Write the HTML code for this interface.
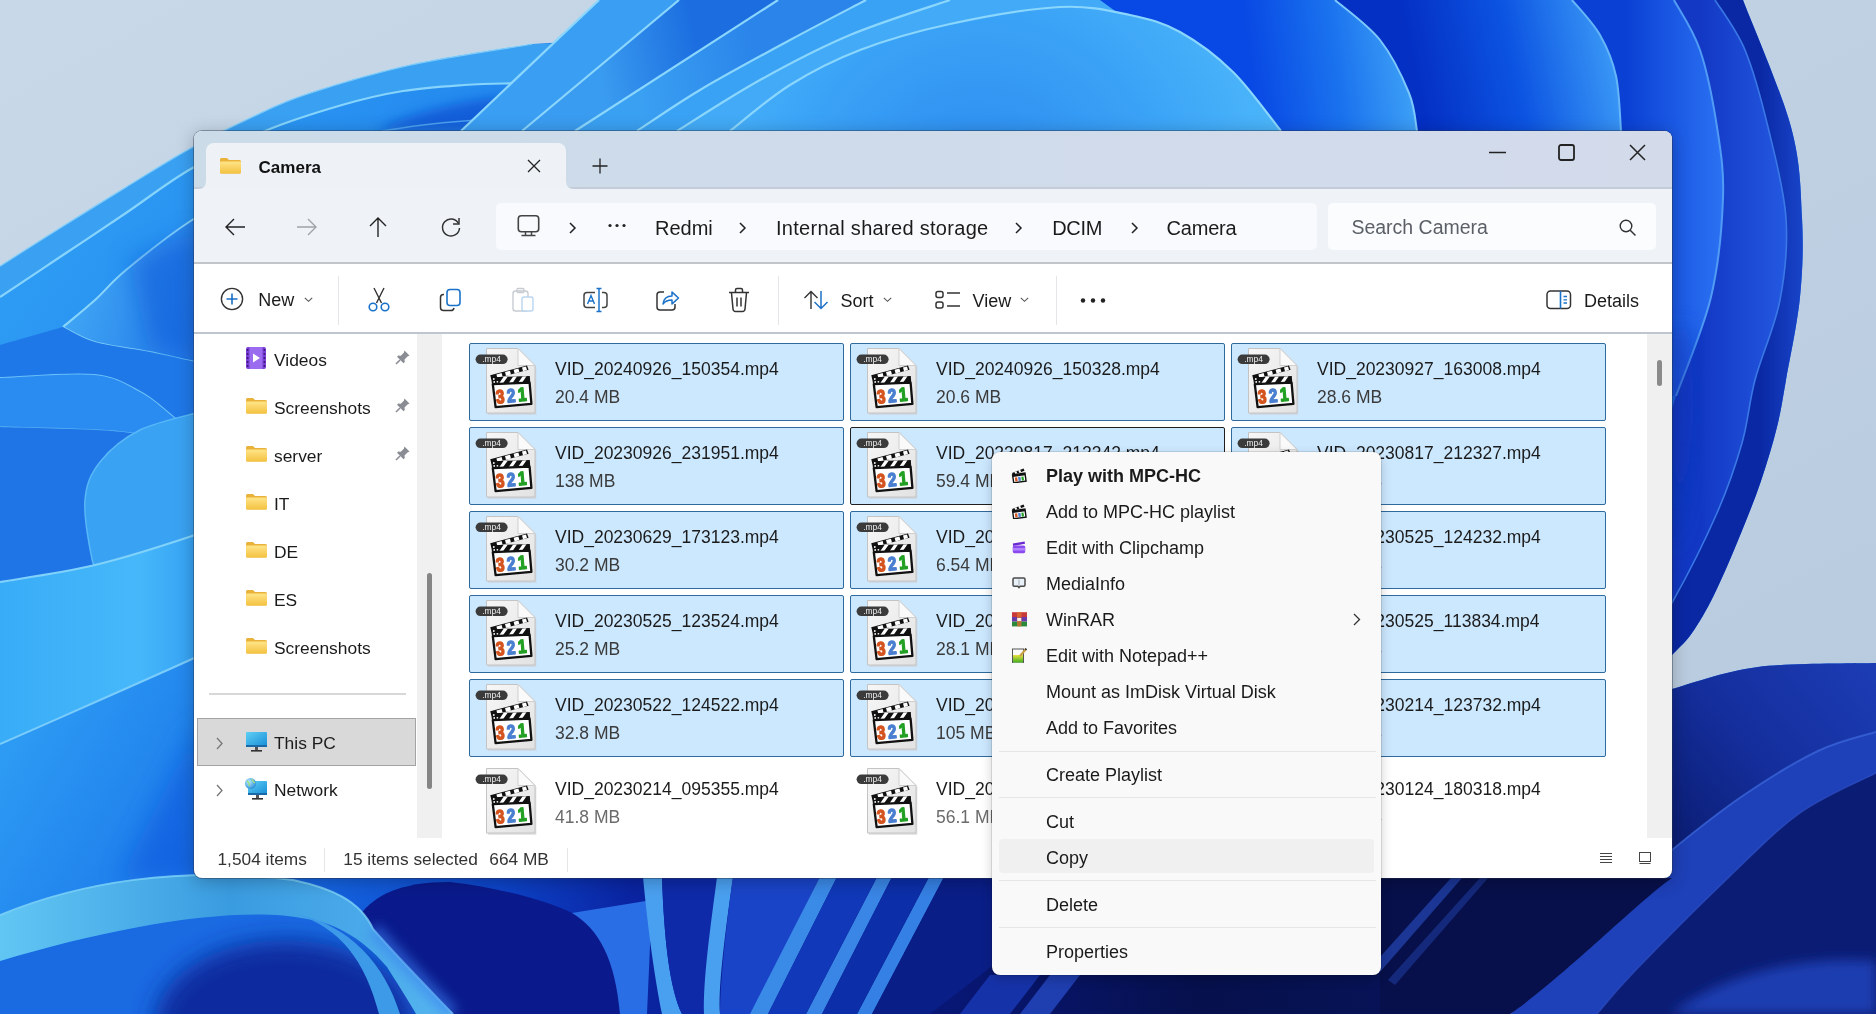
<!DOCTYPE html>
<html><head><meta charset="utf-8">
<style>
*{box-sizing:border-box;margin:0;padding:0}
html,body{width:1876px;height:1014px;overflow:hidden}
body{position:relative;font-family:"Liberation Sans",sans-serif;color:#1a1a1a;background:#c6d6e7}
.abs{position:absolute}
#wall{position:absolute;left:0;top:0;width:1876px;height:1014px}
.win{position:absolute;left:194px;top:131px;width:1478px;height:747px;border-radius:8px;overflow:hidden;background:#fff;box-shadow:0 0 0 1px rgba(40,50,70,.4),0 3px 18px rgba(0,0,0,.26)}
.t{position:absolute;white-space:nowrap;line-height:1}
body{-webkit-font-smoothing:antialiased}
.win,.menu{will-change:transform}
</style></head><body>
<svg id="wall" viewBox="0 0 1876 1014">
<defs>
<linearGradient id="bgL" x1="0" y1="0" x2="1" y2="1"><stop offset="0" stop-color="#c8d8e8"/><stop offset="1" stop-color="#b6c9dd"/></linearGradient>
<radialGradient id="azA" gradientUnits="userSpaceOnUse" cx="980" cy="200" r="300"><stop offset="0" stop-color="#2a88ee"/><stop offset=".6" stop-color="#3aa2f6"/><stop offset="1" stop-color="#4ab4fa"/></radialGradient>
<linearGradient id="midB" gradientUnits="userSpaceOnUse" x1="1250" y1="70" x2="1405" y2="50"><stop offset="0" stop-color="#0848e4"/><stop offset=".55" stop-color="#1a72ee"/><stop offset="1" stop-color="#3c9ef6"/></linearGradient>
<linearGradient id="regC" gradientUnits="userSpaceOnUse" x1="1420" y1="100" x2="1615" y2="60"><stop offset="0" stop-color="#0430c4"/><stop offset=".5" stop-color="#0c54e2"/><stop offset="1" stop-color="#3a98f6"/></linearGradient>
<linearGradient id="regD" gradientUnits="userSpaceOnUse" x1="1625" y1="150" x2="1720" y2="150"><stop offset="0" stop-color="#0a40d4"/><stop offset="1" stop-color="#2a70f2"/></linearGradient>
<linearGradient id="regE" gradientUnits="userSpaceOnUse" x1="1700" y1="200" x2="1785" y2="200"><stop offset="0" stop-color="#1238c4"/><stop offset="1" stop-color="#2458e0"/></linearGradient>
<linearGradient id="regO" gradientUnits="userSpaceOnUse" x1="1760" y1="250" x2="1802" y2="250"><stop offset="0" stop-color="#0a28a4"/><stop offset="1" stop-color="#1844c8"/></linearGradient>
<linearGradient id="bd2" gradientUnits="userSpaceOnUse" x1="600" y1="80" x2="700" y2="60"><stop offset="0" stop-color="#3a9cf0"/><stop offset="1" stop-color="#1c6ee0"/></linearGradient>
<linearGradient id="bd3" gradientUnits="userSpaceOnUse" x1="640" y1="90" x2="760" y2="70"><stop offset="0" stop-color="#3aa0f2"/><stop offset="1" stop-color="#2a84ea"/></linearGradient>
<linearGradient id="ptl" x1="0" y1="0" x2="1" y2="0.3"><stop offset="0" stop-color="#48b2f8"/><stop offset="1" stop-color="#1f74e6"/></linearGradient>
<linearGradient id="azBand" x1="0" y1="0" x2="1" y2="0"><stop offset="0" stop-color="#38acf7"/><stop offset=".6" stop-color="#46b8fa"/><stop offset="1" stop-color="#2c94f0"/></linearGradient>
<linearGradient id="lowL" x1="0" y1="0" x2="1" y2="1"><stop offset="0" stop-color="#32a4f6"/><stop offset=".6" stop-color="#1f80ec"/><stop offset="1" stop-color="#0e5ae0"/></linearGradient>
<linearGradient id="rightLow" gradientUnits="userSpaceOnUse" x1="1876" y1="680" x2="1672" y2="860"><stop offset="0" stop-color="#1c3cb4"/><stop offset=".5" stop-color="#142e9c"/><stop offset="1" stop-color="#0a1c70"/></linearGradient>
<filter id="blur2"><feGaussianBlur stdDeviation="1.5"/></filter>
<filter id="blur6" x="-50%" y="-50%" width="200%" height="200%"><feGaussianBlur stdDeviation="6"/></filter>
<filter id="blur12" x="-50%" y="-50%" width="200%" height="200%"><feGaussianBlur stdDeviation="12"/></filter>
</defs>
<rect width="1876" height="1014" fill="url(#bgL)"/>
<path d="M0 266 C10.5 259.3 42.0 239.2 63.0 226.0 C84.0 212.8 105.0 199.8 126.0 187.0 C147.0 174.2 168.0 160.7 189.0 149.0 C210.0 137.3 232.3 126.2 252.0 117.0 C271.7 107.8 280.7 102.7 307.0 94.0 C333.3 85.3 372.5 73.3 410.0 65.0 C447.5 56.7 511.7 47.5 532.0 44.0 L553 44 L599 0 L1743 0 C1751.0 21.2 1781.2 90.7 1791.0 127.0 C1800.8 163.3 1800.5 189.7 1802.0 218.0 C1803.5 246.3 1802.7 270.0 1800.0 297.0 C1797.3 324.0 1789.8 358.3 1786.0 380.0 C1782.2 401.7 1781.2 410.2 1777.0 427.0 C1772.8 443.8 1767.3 462.5 1761.0 481.0 C1754.7 499.5 1746.8 519.0 1739.0 538.0 C1731.2 557.0 1721.8 579.2 1714.0 595.0 C1706.2 610.8 1699.0 623.0 1692.0 633.0 C1685.0 643.0 1675.3 651.3 1672.0 655.0 L1600 680 L1672 689 C1686.3 685.3 1724.0 671.3 1758.0 667.0 C1792.0 662.7 1856.3 663.7 1876.0 663.0 L1876 1014 L0 1014Z" fill="#1f76ea"/>
<path d="M0 266 C10.5 259.3 42.0 239.2 63.0 226.0 C84.0 212.8 105.0 199.8 126.0 187.0 C147.0 174.2 168.0 160.7 189.0 149.0 C210.0 137.3 232.3 126.2 252.0 117.0 C271.7 107.8 280.7 102.7 307.0 94.0 C333.3 85.3 372.5 73.3 410.0 65.0 C447.5 56.7 511.7 47.5 532.0 44.0 L600 40 L600 890 L0 890 Z" fill="url(#lowL)"/>
<path d="M0 266 C10.5 259.3 42.0 239.2 63.0 226.0 C84.0 212.8 105.0 199.8 126.0 187.0 C147.0 174.2 168.0 160.7 189.0 149.0 C210.0 137.3 232.3 126.2 252.0 117.0 C271.7 107.8 280.7 102.7 307.0 94.0 C333.3 85.3 372.5 73.3 410.0 65.0 C447.5 56.7 511.7 47.5 532.0 44.0 L553 44 L600 0 L640 0 L560 84 C550.7 83.9 520.0 83.3 504.0 83.5 C488.0 83.7 480.8 83.8 464.0 85.0 C447.2 86.2 423.3 87.7 403.0 91.0 C382.7 94.3 365.0 98.3 342.0 105.0 C319.0 111.7 290.5 120.2 265.0 131.0 C239.5 141.8 212.2 156.3 189.0 170.0 C165.8 183.7 147.0 198.8 126.0 213.0 C105.0 227.2 84.0 241.0 63.0 255.0 C42.0 269.0 10.5 290.0 0.0 297.0 Z" fill="#3aa0f2"/>
<path d="M375 131 C400 118 450 100 520 96 L520 131Z" fill="#0c50d2" opacity=".75" filter="url(#blur6)"/>
<path d="M382 131 C388.8 130.0 409.3 126.7 423.0 125.0 C436.7 123.3 447.8 122.2 464.0 121.0 C480.2 119.8 510.7 118.5 520.0 118.0" fill="none" stroke="#4aa0f0" stroke-width="1.6"/>
<path d="M0 297 C10.5 290.0 42.0 269.0 63.0 255.0 C84.0 241.0 105.0 227.2 126.0 213.0 C147.0 198.8 165.8 183.7 189.0 170.0 C212.2 156.3 239.5 141.8 265.0 131.0 C290.5 120.2 319.0 111.7 342.0 105.0 C365.0 98.3 382.7 94.3 403.0 91.0 C423.3 87.7 447.2 86.2 464.0 85.0 C480.8 83.8 488.0 83.7 504.0 83.5 C520.0 83.3 550.7 83.9 560.0 84.0" fill="none" stroke="#86d4fb" stroke-width="2.2"/>
<path d="M0 266 C10.5 259.3 42.0 239.2 63.0 226.0 C84.0 212.8 105.0 199.8 126.0 187.0 C147.0 174.2 168.0 160.7 189.0 149.0 C210.0 137.3 232.3 126.2 252.0 117.0 C271.7 107.8 280.7 102.7 307.0 94.0 C333.3 85.3 372.5 73.3 410.0 65.0 C447.5 56.7 511.7 47.5 532.0 44.0" fill="none" stroke="#9adcfb" stroke-width="1.6" opacity=".7"/>
<path d="M63 327 C68.3 322.5 84.5 309.5 95.0 300.0 C105.5 290.5 110.3 283.0 126.0 270.0 C141.7 257.0 170.0 234.5 189.0 222.0 C208.0 209.5 231.5 199.5 240.0 195.0 L240 370 C233.3 368.8 215.0 366.0 200.0 363.0 C185.0 360.0 167.5 355.5 150.0 352.0 C132.5 348.5 109.5 346.2 95.0 342.0 C80.5 337.8 68.3 329.5 63.0 327.0 Z" fill="url(#ptl)"/>
<path d="M63 327 C68.3 322.5 84.5 309.5 95.0 300.0 C105.5 290.5 110.3 283.0 126.0 270.0 C141.7 257.0 170.0 234.5 189.0 222.0 C208.0 209.5 231.5 199.5 240.0 195.0" fill="none" stroke="#8ad6fb" stroke-width="2"/>
<path d="M63 327 C68.3 329.5 80.5 337.8 95.0 342.0 C109.5 346.2 132.5 348.5 150.0 352.0 C167.5 355.5 185.0 360.0 200.0 363.0 C215.0 366.0 233.3 368.8 240.0 370.0" fill="none" stroke="#7ccdfa" stroke-width="1.8"/>
<path d="M130 260 L200 230 L200 360 L150 350Z" fill="#0e5ad8" opacity=".55" filter="url(#blur12)"/>
<path d="M0 345 L63 327 C68.3 329.5 80.5 337.8 95.0 342.0 C109.5 346.2 132.5 348.5 150.0 352.0 C167.5 355.5 191.7 361.2 200.0 363.0 L200 440 C195.3 436.0 182.0 424.0 172.0 416.0 C162.0 408.0 153.0 398.8 140.0 392.0 C127.0 385.2 117.3 377.3 94.0 375.0 C70.7 372.7 15.7 377.5 0.0 378.0 Z" fill="#1f78e8"/>
<path d="M0 378 C15.7 377.5 70.7 372.7 94.0 375.0 C117.3 377.3 127.0 385.2 140.0 392.0 C153.0 398.8 162.0 408.0 172.0 416.0 C182.0 424.0 195.3 436.0 200.0 440.0" fill="none" stroke="#6cc2f8" stroke-width="2"/>
<path d="M0 378 C15.7 377.5 70.7 372.7 94.0 375.0 C117.3 377.3 127.0 385.2 140.0 392.0 C153.0 398.8 162.0 408.0 172.0 416.0 C182.0 424.0 195.3 436.0 200.0 440.0 L200 455 C193.3 452.5 174.7 444.0 160.0 440.0 C145.3 436.0 138.7 433.2 112.0 431.0 C85.3 428.8 18.7 427.7 0.0 427.0 Z" fill="#2a8cf0"/>
<path d="M0 427 C18.7 427.7 85.3 428.8 112.0 431.0 C138.7 433.2 145.3 436.0 160.0 440.0 C174.7 444.0 193.3 452.5 200.0 455.0" fill="none" stroke="#5ab4f6" stroke-width="1.6"/>
<path d="M0 427 C18.7 427.7 85.3 428.8 112.0 431.0 C138.7 433.2 145.3 436.0 160.0 440.0 C174.7 444.0 193.3 452.5 200.0 455.0 L200 600 L0 600Z" fill="#1f74e6"/>
<path d="M200 412 C190.0 415.0 156.7 421.7 140.0 430.0 C123.3 438.3 109.2 450.3 100.0 462.0 C90.8 473.7 86.3 483.8 85.0 500.0 C83.7 516.2 89.8 548.2 92.0 559.0 C94.2 569.8 97.0 564.0 98.0 565.0 L200 536 Z" fill="#3aa2f2"/>
<path d="M200 412 C190.0 415.0 156.7 421.7 140.0 430.0 C123.3 438.3 109.2 450.3 100.0 462.0 C90.8 473.7 86.3 483.8 85.0 500.0 C83.7 516.2 89.8 548.2 92.0 559.0 C94.2 569.8 97.0 564.0 98.0 565.0" fill="none" stroke="#58b8f8" stroke-width="1.5"/>
<path d="M0 582 C15.8 579.2 63.0 572.7 95.0 565.0 C127.0 557.3 169.5 543.5 192.0 536.0 C214.5 528.5 223.7 522.7 230.0 520.0 L230 640 C223.7 643.2 213.7 649.0 192.0 659.0 C170.3 669.0 132.0 685.8 100.0 700.0 C68.0 714.2 16.7 736.7 0.0 744.0 Z" fill="url(#azBand)"/>
<path d="M0 582 C15.8 579.2 63.0 572.7 95.0 565.0 C127.0 557.3 169.5 543.5 192.0 536.0 C214.5 528.5 223.7 522.7 230.0 520.0" fill="none" stroke="#80d2fa" stroke-width="2"/>
<path d="M0 744 C16.7 736.7 68.0 714.2 100.0 700.0 C132.0 685.8 170.3 669.0 192.0 659.0 C213.7 649.0 223.7 643.2 230.0 640.0 L230 1014 L0 1014Z" fill="url(#lowL)"/>
<path d="M0 744 C16.7 736.7 68.0 714.2 100.0 700.0 C132.0 685.8 170.3 669.0 192.0 659.0 C213.7 649.0 223.7 643.2 230.0 640.0" fill="none" stroke="#7accfa" stroke-width="2"/>
<path d="M120 880 L200 720 L200 880Z" fill="#0a52da" opacity=".55" filter="url(#blur12)"/>
<path d="M461 131 L599 0 L1110 0 L1281 131Z" fill="#3a9ef2"/>
<path d="M522 131 L679 0 L778 0 L575 131Z" fill="url(#bd2)"/>
<path d="M575 131 L778 0 L866 0 C790 40 700 90 637 131Z" fill="url(#bd3)"/>
<path d="M637 131 C647.5 124.2 674.5 105.2 700.0 90.0 C725.5 74.8 762.3 55.0 790.0 40.0 C817.7 25.0 853.3 6.7 866.0 0.0 L950 0 C933.3 5.8 881.7 21.7 850.0 35.0 C818.3 48.3 788.8 64.0 760.0 80.0 C731.2 96.0 690.8 122.5 677.0 131.0 Z" fill="#3aa2f4"/>
<path d="M677 131 C690.8 122.5 731.2 96.0 760.0 80.0 C788.8 64.0 818.3 48.3 850.0 35.0 C881.7 21.7 933.3 5.8 950.0 0.0 L1100 0 L1281 131Z" fill="#42aaf6"/>
<path d="M1100 0 L1335 0 C1342.5 6.7 1367.7 24.5 1380.0 40.0 C1392.3 55.5 1402.8 77.8 1409.0 93.0 C1415.2 108.2 1415.7 124.7 1417.0 131.0 L1281 131Z" fill="url(#midB)"/>
<path d="M730 131 C740.0 123.3 768.3 98.5 790.0 85.0 C811.7 71.5 833.3 60.2 860.0 50.0 C886.7 39.8 916.7 31.2 950.0 24.0 C983.3 16.8 1030.0 8.5 1060.0 7.0 C1090.0 5.5 1110.0 10.8 1130.0 15.0 C1150.0 19.2 1162.8 22.5 1180.0 32.0 C1197.2 41.5 1216.2 55.5 1233.0 72.0 C1249.8 88.5 1273.0 121.2 1281.0 131.0 Z" fill="url(#azA)"/>
<path d="M461 131 L599 0" fill="none" stroke="#8ad6fc" stroke-width="2.2"/>
<path d="M522 131 L679 0" fill="none" stroke="#8ad6fc" stroke-width="2.2"/>
<path d="M575 131 L778 0" fill="none" stroke="#8ad6fc" stroke-width="2.2"/>
<path d="M637 131 C647.5 124.2 674.5 105.2 700.0 90.0 C725.5 74.8 762.3 55.0 790.0 40.0 C817.7 25.0 853.3 6.7 866.0 0.0" fill="none" stroke="#8ad6fc" stroke-width="2.2"/>
<path d="M677 131 C690.8 122.5 731.2 96.0 760.0 80.0 C788.8 64.0 818.3 48.3 850.0 35.0 C881.7 21.7 933.3 5.8 950.0 0.0" fill="none" stroke="#8ad6fc" stroke-width="2.2"/>
<path d="M730 131 C740.0 123.3 768.3 98.5 790.0 85.0 C811.7 71.5 833.3 60.2 860.0 50.0 C886.7 39.8 916.7 31.2 950.0 24.0 C983.3 16.8 1030.0 8.5 1060.0 7.0 C1090.0 5.5 1110.0 10.8 1130.0 15.0 C1150.0 19.2 1162.8 22.5 1180.0 32.0 C1197.2 41.5 1216.2 55.5 1233.0 72.0 C1249.8 88.5 1273.0 121.2 1281.0 131.0" fill="none" stroke="#8ad6fc" stroke-width="2.2"/>
<path d="M1335 0 L1572 0 C1576.7 5.8 1592.7 22.3 1600.0 35.0 C1607.3 47.7 1612.5 60.0 1616.0 76.0 C1619.5 92.0 1620.2 121.8 1621.0 131.0 L1417 131 C1415.7 124.7 1415.2 108.2 1409.0 93.0 C1402.8 77.8 1392.3 55.5 1380.0 40.0 C1367.7 24.5 1342.5 6.7 1335.0 0.0 Z" fill="url(#regC)"/>
<path d="M1335 0 C1342.5 6.7 1367.7 24.5 1380.0 40.0 C1392.3 55.5 1402.8 77.8 1409.0 93.0 C1415.2 108.2 1415.7 124.7 1417.0 131.0" fill="none" stroke="#7cc8fa" stroke-width="2"/>
<path d="M1572 0 L1674 0 C1678.3 8.3 1692.8 28.8 1700.0 50.0 C1707.2 71.2 1713.2 102.3 1717.0 127.0 C1720.8 151.7 1724.0 169.7 1723.0 198.0 C1722.0 226.3 1718.8 264.0 1711.0 297.0 C1703.2 330.0 1681.8 379.5 1676.0 396.0 L1600 400 L1621 131 C1620.2 121.8 1619.5 92.0 1616.0 76.0 C1612.5 60.0 1607.3 47.7 1600.0 35.0 C1592.7 22.3 1576.7 5.8 1572.0 0.0 Z" fill="url(#regD)"/>
<path d="M1572 0 C1576.7 5.8 1592.7 22.3 1600.0 35.0 C1607.3 47.7 1612.5 60.0 1616.0 76.0 C1619.5 92.0 1620.2 121.8 1621.0 131.0" fill="none" stroke="#64b6f8" stroke-width="2"/>
<path d="M1674 0 L1715 0 C1720.0 8.3 1736.2 28.8 1745.0 50.0 C1753.8 71.2 1761.2 99.0 1768.0 127.0 C1774.8 155.0 1784.0 189.2 1786.0 218.0 C1788.0 246.8 1785.2 273.0 1780.0 300.0 C1774.8 327.0 1761.3 356.2 1755.0 380.0 C1748.7 403.8 1748.3 420.8 1742.0 443.0 C1735.7 465.2 1728.5 486.7 1717.0 513.0 C1705.5 539.3 1685.8 578.2 1673.0 601.0 C1660.2 623.8 1645.5 641.8 1640.0 650.0 L1600 640 L1676 396 C1681.8 379.5 1703.2 330.0 1711.0 297.0 C1718.8 264.0 1722.0 226.3 1723.0 198.0 C1724.0 169.7 1720.8 151.7 1717.0 127.0 C1713.2 102.3 1707.2 71.2 1700.0 50.0 C1692.8 28.8 1678.3 8.3 1674.0 0.0 Z" fill="url(#regE)"/>
<path d="M1674 0 C1678.3 8.3 1692.8 28.8 1700.0 50.0 C1707.2 71.2 1713.2 102.3 1717.0 127.0 C1720.8 151.7 1724.0 169.7 1723.0 198.0 C1722.0 226.3 1718.8 264.0 1711.0 297.0 C1703.2 330.0 1681.8 379.5 1676.0 396.0" fill="none" stroke="#509cf5" stroke-width="2"/>
<path d="M1715 0 L1743 0 C1751.0 21.2 1781.2 90.7 1791.0 127.0 C1800.8 163.3 1800.5 189.7 1802.0 218.0 C1803.5 246.3 1802.7 270.0 1800.0 297.0 C1797.3 324.0 1789.8 358.3 1786.0 380.0 C1782.2 401.7 1781.2 410.2 1777.0 427.0 C1772.8 443.8 1767.3 462.5 1761.0 481.0 C1754.7 499.5 1746.8 519.0 1739.0 538.0 C1731.2 557.0 1721.8 579.2 1714.0 595.0 C1706.2 610.8 1699.0 623.0 1692.0 633.0 C1685.0 643.0 1675.3 651.3 1672.0 655.0 L1600 660 L1640 650 C1645.5 641.8 1660.2 623.8 1673.0 601.0 C1685.8 578.2 1705.5 539.3 1717.0 513.0 C1728.5 486.7 1735.7 465.2 1742.0 443.0 C1748.3 420.8 1748.7 403.8 1755.0 380.0 C1761.3 356.2 1774.8 327.0 1780.0 300.0 C1785.2 273.0 1788.0 246.8 1786.0 218.0 C1784.0 189.2 1774.8 155.0 1768.0 127.0 C1761.2 99.0 1753.8 71.2 1745.0 50.0 C1736.2 28.8 1720.0 8.3 1715.0 0.0 Z" fill="url(#regO)"/>
<path d="M1715 0 C1720.0 8.3 1736.2 28.8 1745.0 50.0 C1753.8 71.2 1761.2 99.0 1768.0 127.0 C1774.8 155.0 1784.0 189.2 1786.0 218.0 C1788.0 246.8 1785.2 273.0 1780.0 300.0 C1774.8 327.0 1761.3 356.2 1755.0 380.0 C1748.7 403.8 1748.3 420.8 1742.0 443.0 C1735.7 465.2 1728.5 486.7 1717.0 513.0 C1705.5 539.3 1685.8 578.2 1673.0 601.0 C1660.2 623.8 1645.5 641.8 1640.0 650.0" fill="none" stroke="#3a78e6" stroke-width="1.6"/>
<path d="M1690 330 C1700 420 1690 500 1672 560 L1672 330Z" fill="#0c36b8" opacity=".6" filter="url(#blur12)"/>
<!-- bottom -->
<linearGradient id="botG" x1="0" y1="0" x2="1" y2="0"><stop offset="0" stop-color="#1b76e8"/><stop offset=".08" stop-color="#1462de"/><stop offset=".18" stop-color="#0d44c8"/><stop offset=".26" stop-color="#0a24a2"/><stop offset=".42" stop-color="#08187c"/><stop offset=".6" stop-color="#06104c"/><stop offset="1" stop-color="#081a70"/></linearGradient>
<rect x="194" y="876" width="1682" height="138" fill="url(#botG)"/>
<radialGradient id="navyR" cx=".5" cy=".5" r=".5"><stop offset="0" stop-color="#0a1f88"/><stop offset="1" stop-color="#0a1f88" stop-opacity="0"/></radialGradient>
<path d="M360 915 C375 895 400 882 450 882 C500 888 545 900 572 913 C605 933 630 970 647 1014 L440 1014Z" fill="#0a1a8c"/>
<ellipse cx="300" cy="1010" rx="120" ry="70" fill="#0b2a9c" opacity=".8" filter="url(#blur6)"/>
<path d="M0 961 C120 925 240 905 307 919 C330 922 360 935 387 967 C395 980 405 995 416 1014 L0 1014Z" fill="#1a6ae2"/>
<ellipse cx="285" cy="1025" rx="130" ry="85" fill="#0a2c9e" filter="url(#blur12)"/>
<linearGradient id="arcG" x1="0" y1="0" x2="460" y2="0" gradientUnits="userSpaceOnUse"><stop offset="0" stop-color="#62c6f4"/><stop offset=".5" stop-color="#3a9ce0"/><stop offset=".8" stop-color="#4aaaea"/><stop offset="1" stop-color="#58b8f0"/></linearGradient>
<path d="M0 915 C80 882 180 866 293 880 C330 888 360 900 373 929 C400 960 430 990 453 1014 L416 1014 C405 995 395 980 387 967 C360 935 330 922 307 919 C240 905 120 925 0 961Z" fill="url(#arcG)"/>
<path d="M0 915 C80 882 180 866 293 880 C330 888 360 900 373 929 C400 960 430 990 453 1014" fill="none" stroke="#80d4f8" stroke-width="2" opacity=".8"/>
<path d="M296 914 C340 928 365 960 379 1014 L400 1014 C385 965 350 925 296 914Z" fill="#3c9ae8"/>
<path d="M373 929 C400 960 430 990 453 1014" fill="none" stroke="#3a80f0" stroke-width="14" opacity=".6" filter="url(#blur6)"/>
<path d="M572 913 L652 900 L647 1014 L620 1014 C615 960 600 930 572 913Z" fill="#2a6ee6"/>
<path d="M643 877 L662 877 C664 940 670 990 682 1014 L662 1014 C655 980 648 930 643 877Z" fill="#4aa0f0"/>
<path d="M662 877 L718 877 C712 930 708 980 706 1014 L682 1014 C670 990 664 940 662 877Z" fill="#0e2aa8"/>
<path d="M717 877 L733 877 C724 940 718 990 720 1014 L704 1014 C703 980 710 930 717 877Z" fill="#4aa0f0"/>
<path d="M733 877 L820 877 L752 1014 L720 1014 C720 990 724 940 733 877Z" fill="#1a44c8"/>
<path d="M820 877 L837 877 L768 1014 L750 1014Z" fill="#3a8ae8"/>
<path d="M877 877 L892 877 L822 1014 L806 1014Z" fill="#3a86e6"/>
<path d="M837 877 L877 877 L806 1014 L768 1014Z" fill="#1038b8"/>
<path d="M929 877 L944 877 L872 1014 L857 1014Z" fill="#3580e4"/>
<path d="M892 877 L929 877 L857 1014 L822 1014Z" fill="#0c2ea8"/>
<path d="M944 877 L1000 877 L1000 960 L930 1014 L872 1014Z" fill="#0a1e88"/>
<path d="M990 975 L1040 975 L1010 1014 L960 1014Z" fill="#1a3ab8" opacity=".8"/>
<path d="M1050 975 L1080 975 L1050 1014 L1020 1014Z" fill="#2a50d0" opacity=".7"/>

<path d="M1672 689 C1686.3 685.3 1724.0 671.3 1758.0 667.0 C1792.0 662.7 1856.3 663.7 1876.0 663.0 L1876 1014 L1380 1014 L1380 700Z" fill="url(#rightLow)"/>
<path d="M1876 732 C1866.3 735.2 1840.0 740.5 1818.0 751.0 C1796.0 761.5 1768.3 778.5 1744.0 795.0 C1719.7 811.5 1694.3 831.7 1672.0 850.0 C1649.7 868.3 1632.0 883.3 1610.0 905.0 C1588.0 926.7 1556.7 961.8 1540.0 980.0 C1523.3 998.2 1515.0 1008.3 1510.0 1014.0 L1597 1014 C1603.2 1007.0 1612.5 994.3 1634.0 972.0 C1655.5 949.7 1698.3 906.5 1726.0 880.0 C1753.7 853.5 1775.0 830.8 1800.0 813.0 C1825.0 795.2 1863.3 779.7 1876.0 773.0 Z" fill="#1e40b8"/>
<path d="M1876 732 C1866.3 735.2 1840.0 740.5 1818.0 751.0 C1796.0 761.5 1768.3 778.5 1744.0 795.0 C1719.7 811.5 1694.3 831.7 1672.0 850.0 C1649.7 868.3 1632.0 883.3 1610.0 905.0 C1588.0 926.7 1556.7 961.8 1540.0 980.0 C1523.3 998.2 1515.0 1008.3 1510.0 1014.0" fill="none" stroke="#3a64d8" stroke-width="2" opacity=".8"/>
<path d="M1876 773 C1863.3 779.7 1825.0 795.2 1800.0 813.0 C1775.0 830.8 1753.7 853.5 1726.0 880.0 C1698.3 906.5 1655.5 949.7 1634.0 972.0 C1612.5 994.3 1603.2 1007.0 1597.0 1014.0 L1876 1014Z" fill="#0b1c74"/>
<path d="M1876 773 C1863.3 779.7 1825.0 795.2 1800.0 813.0 C1775.0 830.8 1753.7 853.5 1726.0 880.0 C1698.3 906.5 1655.5 949.7 1634.0 972.0 C1612.5 994.3 1603.2 1007.0 1597.0 1014.0" fill="none" stroke="#3558d0" stroke-width="1.5" opacity=".6"/>
<path d="M1671 1014 C1720 975 1800 955 1876 961 L1876 1014Z" fill="#1a3cb0" filter="url(#blur6)"/>
<path d="M1380 1014 L1380 878 L1672 878 C1640 900 1560 980 1510 1014Z" fill="#07104a"/>
<path d="M1451 878 L1462 878 L1380 972 L1372 966Z" fill="#2a50c8" opacity=".6"/>
<path d="M1480 878 L1488 878 L1395 985 L1388 980Z" fill="#2a50c8" opacity=".4"/>
</svg>

<div class="win">
<div class="abs" style="left:0px;top:0px;width:1478px;height:58px;background:linear-gradient(90deg,#cbdbe8 0%,#cfdbea 40%,#d3dbeb 100%)"></div>
<div class="abs" style="left:0px;top:56px;width:1478px;height:2px;background:#c4ccda"></div>
<div class="abs" style="left:12px;top:12px;width:360px;height:48px;background:#eef2f7;border-radius:8px 8px 0 0"></div>
<svg class="abs" style="left:4px;top:50px" width="8" height="8"><path d="M0 8 Q8 8 8 0 L8 8Z" fill="#eef2f7"/></svg>
<svg class="abs" style="left:372px;top:50px" width="8" height="8"><path d="M8 8 Q0 8 0 0 L0 8Z" fill="#eef2f7"/></svg>
<svg class="abs" style="left:25px;top:25px" width="24" height="19" viewBox="0 0 24 19"><path d="M1 3.5 Q1 2 2.5 2 H8 L10 4 H20.5 Q22 4 22 5.5 V16 Q22 17.5 20.5 17.5 H2.5 Q1 17.5 1 16Z" fill="#e9b23a"/><path d="M1 6.5 Q1 5.5 2 5.5 H21 Q22 5.5 22 6.5 V16 Q22 17.5 20.5 17.5 H2.5 Q1 17.5 1 16Z" fill="url(#fg)"/></svg>
<div class="t" style="left:64.6px;top:27.6px;font-size:17px;color:#111;font-weight:700;">Camera</div>
<svg class="abs" style="left:333px;top:28px" width="14" height="14" viewBox="0 0 14 14"><path d="M1 1L13 13M13 1L1 13" stroke="#222" stroke-width="1.3"/></svg>
<svg class="abs" style="left:398px;top:27px" width="16" height="16" viewBox="0 0 16 16"><path d="M8 0.5V15.5M0.5 8H15.5" stroke="#222" stroke-width="1.3"/></svg>
<svg class="abs" style="left:1295px;top:20px" width="17" height="3" viewBox="0 0 17 3"><path d="M0 1.5H17" stroke="#222" stroke-width="1.3"/></svg>
<svg class="abs" style="left:1364px;top:13px" width="17" height="17" viewBox="0 0 17 17"><rect x="1" y="1" width="15" height="15" rx="2" fill="none" stroke="#222" stroke-width="1.8"/></svg>
<svg class="abs" style="left:1435px;top:13px" width="17" height="17" viewBox="0 0 17 17"><path d="M1 1L16 16M16 1L1 16" stroke="#222" stroke-width="1.5"/></svg>
<div class="abs" style="left:0px;top:58px;width:1478px;height:74px;background:#eff3f8"></div>
<div class="abs" style="left:0px;top:131px;width:1478px;height:2px;background:#c2c5ca"></div>
<svg class="abs" style="left:30px;top:85px" width="22" height="22" viewBox="0 0 22 22"><path d="M21 11H2M10 3L2 11L10 19" fill="none" stroke="#222" stroke-width="1.4"/></svg>
<svg class="abs" style="left:102px;top:85px" width="22" height="22" viewBox="0 0 22 22"><path d="M1 11H20M12 3L20 11L12 19" fill="none" stroke="#a0a4a8" stroke-width="1.4"/></svg>
<svg class="abs" style="left:173px;top:85px" width="22" height="22" viewBox="0 0 22 22"><path d="M11 21V2M3 10L11 2L19 10" fill="none" stroke="#222" stroke-width="1.4"/></svg>
<svg class="abs" style="left:246px;top:85px" width="22" height="22" viewBox="0 0 22 22"><path d="M18.5 7.5A8.5 8.5 0 1 0 19.5 12" fill="none" stroke="#333" stroke-width="1.5"/><path d="M19 2V8H13" fill="none" stroke="#333" stroke-width="1.5"/></svg>
<div class="abs" style="left:302px;top:72px;width:821px;height:47px;background:#f8fafd;border-radius:5px"></div>
<svg class="abs" style="left:322px;top:83px" width="24" height="23" viewBox="0 0 24 23"><rect x="2.3" y="1.8" width="20.4" height="16" rx="3" fill="none" stroke="#444" stroke-width="1.6"/><path d="M9.5 18V21.5M15.5 18V21.5M5.5 21.5H19.5" stroke="#444" stroke-width="1.5"/></svg>
<svg class="abs" style="left:375px;top:91px" width="8" height="12" viewBox="0 0 8 12"><path d="M1 1L6 6L1 11" fill="none" stroke="#222" stroke-width="1.5"/></svg>
<svg class="abs" style="left:545px;top:91px" width="8" height="12" viewBox="0 0 8 12"><path d="M1 1L6 6L1 11" fill="none" stroke="#222" stroke-width="1.5"/></svg>
<svg class="abs" style="left:821px;top:91px" width="8" height="12" viewBox="0 0 8 12"><path d="M1 1L6 6L1 11" fill="none" stroke="#222" stroke-width="1.5"/></svg>
<svg class="abs" style="left:937px;top:91px" width="8" height="12" viewBox="0 0 8 12"><path d="M1 1L6 6L1 11" fill="none" stroke="#222" stroke-width="1.5"/></svg>
<svg class="abs" style="left:414px;top:92px" width="18" height="5" viewBox="0 0 18 5"><circle cx="2" cy="2.5" r="1.6" fill="#222"/><circle cx="9" cy="2.5" r="1.6" fill="#222"/><circle cx="16" cy="2.5" r="1.6" fill="#222"/></svg>
<div class="t" style="left:461.0px;top:86.8px;font-size:20px;color:#1b1b1b;">Redmi</div>
<div class="t" style="left:581.9px;top:86.8px;font-size:20px;color:#1b1b1b;letter-spacing:0.3px;">Internal shared storage</div>
<div class="t" style="left:858.2px;top:86.8px;font-size:20px;color:#1b1b1b;letter-spacing:-0.3px;">DCIM</div>
<div class="t" style="left:972.5px;top:86.8px;font-size:20px;color:#1b1b1b;letter-spacing:-0.2px;">Camera</div>
<div class="abs" style="left:1134px;top:72px;width:328px;height:47px;background:#fafcfe;border-radius:5px"></div>
<div class="t" style="left:1157.4px;top:87.4px;font-size:19.5px;color:#5b5f66;">Search Camera</div>
<svg class="abs" style="left:1425px;top:88px" width="18" height="18" viewBox="0 0 18 18"><circle cx="7" cy="7" r="5.8" fill="none" stroke="#333" stroke-width="1.4"/><path d="M11.2 11.2L16.5 16.5" stroke="#333" stroke-width="1.5"/></svg>
<div class="abs" style="left:0px;top:133px;width:1478px;height:69px;background:#fff"></div>
<div class="abs" style="left:0px;top:201px;width:1478px;height:2px;background:#c0c6ce"></div>
<svg class="abs" style="left:26px;top:156px" width="24" height="24" viewBox="0 0 24 24"><circle cx="12" cy="12" r="10.6" fill="none" stroke="#333" stroke-width="1.4"/><path d="M12 6.5V17.5M6.5 12H17.5" stroke="#1a6fc4" stroke-width="1.6"/></svg>
<div class="t" style="left:64.2px;top:160.3px;font-size:18px;color:#1b1b1b;">New</div>
<svg class="abs" style="left:110px;top:166px" width="9" height="6" viewBox="0 0 9 6"><path d="M0.8 0.8L4.5 4.3L8.2 0.8" fill="none" stroke="#555" stroke-width="1.1"/></svg>
<div class="abs" style="left:144px;top:145px;width:1px;height:49px;background:#e3e5e8"></div>
<div class="abs" style="left:584px;top:145px;width:1px;height:49px;background:#e3e5e8"></div>
<div class="abs" style="left:862px;top:145px;width:1px;height:49px;background:#e3e5e8"></div>
<svg class="abs" style="left:173px;top:156px" width="24" height="26" viewBox="0 0 24 26"><path d="M7 1L14.5 16M17 1L9.5 16" stroke="#333" stroke-width="1.4" fill="none"/><circle cx="6" cy="20" r="3.8" fill="none" stroke="#1a72c9" stroke-width="1.6"/><circle cx="18" cy="20" r="3.8" fill="none" stroke="#1a72c9" stroke-width="1.6"/></svg>
<svg class="abs" style="left:245px;top:157px" width="25" height="24" viewBox="0 0 25 24"><path d="M5 6.5H4.5Q1.5 6.5 1.5 9.5V19.5Q1.5 22.5 4.5 22.5H12Q14.5 22.5 15 20" fill="none" stroke="#333" stroke-width="1.5"/><rect x="8" y="1.5" width="13" height="16" rx="3" fill="none" stroke="#1a72c9" stroke-width="1.6"/></svg>
<svg class="abs" style="left:317px;top:156px" width="25" height="26" viewBox="0 0 25 26"><rect x="2" y="4" width="15" height="20" rx="2.5" fill="none" stroke="#c8ccd2" stroke-width="1.4"/><rect x="6" y="1.5" width="7" height="4" rx="1" fill="none" stroke="#c8ccd2" stroke-width="1.3"/><rect x="11" y="10" width="11" height="14" rx="2" fill="#fff" stroke="#b9d6f0" stroke-width="1.4"/></svg>
<svg class="abs" style="left:387px;top:156px" width="28" height="26" viewBox="0 0 28 26"><path d="M14 5.5H6Q3 5.5 3 8.5V17.5Q3 20.5 6 20.5H14M21 5.5H23Q26 5.5 26 8.5V17.5Q26 20.5 23 20.5H21" fill="none" stroke="#444" stroke-width="1.5"/><path d="M18 1.5V24.5M15.5 1.5H20.5M15.5 24.5H20.5" stroke="#1a72c9" stroke-width="1.5"/><path d="M6.5 17L10 8.5L13.5 17M7.8 14H12.2" fill="none" stroke="#1a72c9" stroke-width="1.4"/></svg>
<svg class="abs" style="left:461px;top:156px" width="25" height="25" viewBox="0 0 25 25"><path d="M9 5H5Q2 5 2 8V20Q2 23 5 23H17Q20 23 20 20V17" fill="none" stroke="#333" stroke-width="1.5"/><path d="M8 17Q9 9 17 9V5L23.5 11L17 17V13Q11 13 8 17Z" fill="none" stroke="#1a72c9" stroke-width="1.5" stroke-linejoin="round"/></svg>
<svg class="abs" style="left:533px;top:156px" width="24" height="26" viewBox="0 0 24 26"><path d="M2 5.5H22M8.5 5V3Q8.5 1.5 10 1.5H14Q15.5 1.5 15.5 3V5M4.5 6L6 22Q6.3 24.5 8.5 24.5H15.5Q17.7 24.5 18 22L19.5 6M10 10.5V19.5M14 10.5V19.5" fill="none" stroke="#333" stroke-width="1.5"/></svg>
<svg class="abs" style="left:609px;top:159px" width="26" height="20" viewBox="0 0 26 20"><path d="M8 19V1.5M1.5 8L8 1.5L14.5 8" fill="none" stroke="#333" stroke-width="1.4"/><path d="M18 1V18.5M11.5 12L18 18.5L24.5 12" fill="none" stroke="#1a72c9" stroke-width="1.5"/></svg>
<div class="t" style="left:646.6px;top:160.6px;font-size:18px;color:#1b1b1b;">Sort</div>
<svg class="abs" style="left:689px;top:166px" width="9" height="6" viewBox="0 0 9 6"><path d="M0.8 0.8L4.5 4.3L8.2 0.8" fill="none" stroke="#555" stroke-width="1.1"/></svg>
<svg class="abs" style="left:741px;top:159px" width="26" height="20" viewBox="0 0 26 20"><rect x="1" y="1.5" width="7" height="6" rx="2" fill="none" stroke="#333" stroke-width="1.5"/><rect x="1" y="12" width="7" height="6" rx="2" fill="none" stroke="#333" stroke-width="1.5"/><path d="M12 3H25M12 16H25" stroke="#333" stroke-width="1.5"/></svg>
<div class="t" style="left:778.5px;top:160.6px;font-size:18px;color:#1b1b1b;">View</div>
<svg class="abs" style="left:826px;top:166px" width="9" height="6" viewBox="0 0 9 6"><path d="M0.8 0.8L4.5 4.3L8.2 0.8" fill="none" stroke="#555" stroke-width="1.1"/></svg>
<svg class="abs" style="left:886px;top:166px" width="26" height="7" viewBox="0 0 26 7"><circle cx="3" cy="3.5" r="2.2" fill="#222"/><circle cx="13" cy="3.5" r="2.2" fill="#222"/><circle cx="23" cy="3.5" r="2.2" fill="#222"/></svg>
<svg class="abs" style="left:1352px;top:159px" width="26" height="20" viewBox="0 0 26 20"><rect x="1" y="1" width="23.5" height="17.5" rx="3.5" fill="none" stroke="#333" stroke-width="1.5"/><path d="M14.5 1V18.5" stroke="#1a72c9" stroke-width="1.6"/><path d="M17.5 6.5H21M17.5 9.8H21M17.5 13H21" stroke="#1a72c9" stroke-width="1.3"/></svg>
<div class="t" style="left:1390.0px;top:160.6px;font-size:18px;color:#1b1b1b;">Details</div>
<div class="abs" style="left:223px;top:203px;width:25px;height:504px;background:#f0f0f0"></div>
<div class="abs" style="left:233px;top:442px;width:5px;height:216px;background:#858585;border-radius:3px"></div>
<div class="abs" style="left:1453px;top:203px;width:25px;height:504px;background:#f0f0f0"></div>
<div class="abs" style="left:1463px;top:229px;width:5px;height:26px;background:#8a8a8a;border-radius:3px"></div>
<svg class="abs" style="left:51px;top:215px" width="22" height="24" viewBox="0 0 22 24"><rect x="1" y="1" width="20" height="22" rx="2" fill="#7b3fd6"/><rect x="4.5" y="1" width="13" height="22" fill="#9b6cf0"/><path d="M8 7.5L15 12L8 16.5Z" fill="#fff"/><g fill="#3d1a80"><rect x="1.8" y="3" width="1.6" height="2"/><rect x="1.8" y="7" width="1.6" height="2"/><rect x="1.8" y="11" width="1.6" height="2"/><rect x="1.8" y="15" width="1.6" height="2"/><rect x="1.8" y="19" width="1.6" height="2"/><rect x="18.6" y="3" width="1.6" height="2"/><rect x="18.6" y="7" width="1.6" height="2"/><rect x="18.6" y="11" width="1.6" height="2"/><rect x="18.6" y="15" width="1.6" height="2"/><rect x="18.6" y="19" width="1.6" height="2"/></g></svg>
<div class="t" style="left:80.0px;top:220.8px;font-size:17.4px;color:#1b1b1b;">Videos</div>
<svg class="abs" style="left:201px;top:218px" width="16" height="16" viewBox="0 0 16 16"><path d="M9.5 1.5L14.5 6.5L12.5 7.5L9.5 10.5L9.8 13L8.5 14.3L2 7.8L3.3 6.5L5.8 6.8L8.8 3.8Z" fill="#8a8e94"/><path d="M5 11L1 15" stroke="#8a8e94" stroke-width="1.6"/></svg>
<svg class="abs" style="left:51px;top:265px" width="24" height="19" viewBox="0 0 24 19"><path d="M1 3.5 Q1 2 2.5 2 H8 L10 4 H20.5 Q22 4 22 5.5 V16 Q22 17.5 20.5 17.5 H2.5 Q1 17.5 1 16Z" fill="#e9b23a"/><path d="M1 6.5 Q1 5.5 2 5.5 H21 Q22 5.5 22 6.5 V16 Q22 17.5 20.5 17.5 H2.5 Q1 17.5 1 16Z" fill="url(#fg)"/></svg>
<div class="t" style="left:80.0px;top:268.8px;font-size:17.4px;color:#1b1b1b;">Screenshots</div>
<svg class="abs" style="left:201px;top:266px" width="16" height="16" viewBox="0 0 16 16"><path d="M9.5 1.5L14.5 6.5L12.5 7.5L9.5 10.5L9.8 13L8.5 14.3L2 7.8L3.3 6.5L5.8 6.8L8.8 3.8Z" fill="#8a8e94"/><path d="M5 11L1 15" stroke="#8a8e94" stroke-width="1.6"/></svg>
<svg class="abs" style="left:51px;top:313px" width="24" height="19" viewBox="0 0 24 19"><path d="M1 3.5 Q1 2 2.5 2 H8 L10 4 H20.5 Q22 4 22 5.5 V16 Q22 17.5 20.5 17.5 H2.5 Q1 17.5 1 16Z" fill="#e9b23a"/><path d="M1 6.5 Q1 5.5 2 5.5 H21 Q22 5.5 22 6.5 V16 Q22 17.5 20.5 17.5 H2.5 Q1 17.5 1 16Z" fill="url(#fg)"/></svg>
<div class="t" style="left:80.0px;top:316.8px;font-size:17.4px;color:#1b1b1b;">server</div>
<svg class="abs" style="left:201px;top:314px" width="16" height="16" viewBox="0 0 16 16"><path d="M9.5 1.5L14.5 6.5L12.5 7.5L9.5 10.5L9.8 13L8.5 14.3L2 7.8L3.3 6.5L5.8 6.8L8.8 3.8Z" fill="#8a8e94"/><path d="M5 11L1 15" stroke="#8a8e94" stroke-width="1.6"/></svg>
<svg class="abs" style="left:51px;top:361px" width="24" height="19" viewBox="0 0 24 19"><path d="M1 3.5 Q1 2 2.5 2 H8 L10 4 H20.5 Q22 4 22 5.5 V16 Q22 17.5 20.5 17.5 H2.5 Q1 17.5 1 16Z" fill="#e9b23a"/><path d="M1 6.5 Q1 5.5 2 5.5 H21 Q22 5.5 22 6.5 V16 Q22 17.5 20.5 17.5 H2.5 Q1 17.5 1 16Z" fill="url(#fg)"/></svg>
<div class="t" style="left:80.0px;top:364.8px;font-size:17.4px;color:#1b1b1b;">IT</div>
<svg class="abs" style="left:51px;top:409px" width="24" height="19" viewBox="0 0 24 19"><path d="M1 3.5 Q1 2 2.5 2 H8 L10 4 H20.5 Q22 4 22 5.5 V16 Q22 17.5 20.5 17.5 H2.5 Q1 17.5 1 16Z" fill="#e9b23a"/><path d="M1 6.5 Q1 5.5 2 5.5 H21 Q22 5.5 22 6.5 V16 Q22 17.5 20.5 17.5 H2.5 Q1 17.5 1 16Z" fill="url(#fg)"/></svg>
<div class="t" style="left:80.0px;top:412.8px;font-size:17.4px;color:#1b1b1b;">DE</div>
<svg class="abs" style="left:51px;top:457px" width="24" height="19" viewBox="0 0 24 19"><path d="M1 3.5 Q1 2 2.5 2 H8 L10 4 H20.5 Q22 4 22 5.5 V16 Q22 17.5 20.5 17.5 H2.5 Q1 17.5 1 16Z" fill="#e9b23a"/><path d="M1 6.5 Q1 5.5 2 5.5 H21 Q22 5.5 22 6.5 V16 Q22 17.5 20.5 17.5 H2.5 Q1 17.5 1 16Z" fill="url(#fg)"/></svg>
<div class="t" style="left:80.0px;top:460.8px;font-size:17.4px;color:#1b1b1b;">ES</div>
<svg class="abs" style="left:51px;top:505px" width="24" height="19" viewBox="0 0 24 19"><path d="M1 3.5 Q1 2 2.5 2 H8 L10 4 H20.5 Q22 4 22 5.5 V16 Q22 17.5 20.5 17.5 H2.5 Q1 17.5 1 16Z" fill="#e9b23a"/><path d="M1 6.5 Q1 5.5 2 5.5 H21 Q22 5.5 22 6.5 V16 Q22 17.5 20.5 17.5 H2.5 Q1 17.5 1 16Z" fill="url(#fg)"/></svg>
<div class="t" style="left:80.0px;top:508.8px;font-size:17.4px;color:#1b1b1b;">Screenshots</div>
<div class="abs" style="left:15px;top:562px;width:197px;height:2px;background:#d8d8d8"></div>
<div class="abs" style="left:3px;top:587px;width:219px;height:48px;background:#d9d9d9;border:1px solid #a3a3a3"></div>
<svg class="abs" style="left:22px;top:606px" width="8" height="13" viewBox="0 0 8 13"><path d="M1 1L6 6.5L1 12" fill="none" stroke="#777" stroke-width="1.3"/></svg>
<svg class="abs" style="left:22px;top:653px" width="8" height="13" viewBox="0 0 8 13"><path d="M1 1L6 6.5L1 12" fill="none" stroke="#777" stroke-width="1.3"/></svg>
<svg class="abs" style="left:51px;top:600px" width="23" height="21" viewBox="0 0 23 21"><rect x="1" y="1" width="21" height="14" rx="1" fill="url(#pcg)"/><rect x="1" y="14" width="21" height="2" fill="#1b6aa8"/><rect x="10" y="16" width="3" height="3" fill="#555"/><rect x="6" y="19" width="11" height="1.6" fill="#333"/></svg>
<div class="t" style="left:80.0px;top:603.7px;font-size:17.4px;color:#1b1b1b;">This PC</div>
<svg class="abs" style="left:50px;top:646px" width="24" height="23" viewBox="0 0 24 23"><rect x="4" y="4" width="19" height="13" rx="1" fill="url(#pcg)"/><rect x="4" y="16" width="19" height="2" fill="#1b6aa8"/><rect x="12" y="18" width="3" height="3" fill="#555"/><rect x="8" y="21" width="11" height="1.6" fill="#333"/><circle cx="6.5" cy="6.5" r="5.5" fill="url(#glb)"/><path d="M3 4Q6 6 5 9M8 2Q9 5 11 6" stroke="#9be07a" stroke-width="1.3" fill="none"/></svg>
<div class="t" style="left:80.0px;top:650.9px;font-size:17.4px;color:#1b1b1b;">Network</div>
<div class="t" style="left:23.5px;top:720.3px;font-size:17.3px;color:#333;">1,504 items</div>
<div class="abs" style="left:130px;top:717px;width:1px;height:24px;background:#e5e5e5"></div>
<div class="t" style="left:149.3px;top:720.3px;font-size:17.3px;color:#333;">15 items selected</div>
<div class="t" style="left:295.3px;top:720.3px;font-size:17.3px;color:#333;">664 MB</div>
<div class="abs" style="left:373px;top:717px;width:1px;height:24px;background:#e5e5e5"></div>
<svg class="abs" style="left:1406px;top:721px" width="13" height="12" viewBox="0 0 13 12"><path d="M0 1.5H12M0 4.5H12M0 7.5H12M0 10.5H12" stroke="#444" stroke-width="1"/></svg>
<svg class="abs" style="left:1444px;top:720px" width="14" height="14" viewBox="0 0 14 14"><rect x="1.5" y="1.5" width="11" height="9" fill="none" stroke="#444" stroke-width="1"/><path d="M1.5 12.5H12.5" stroke="#444" stroke-width="1"/></svg>
<div class="abs" style="left:275px;top:212px;width:375px;height:78px;background:#cce8ff;border:1px solid #2f6a9c;border-radius:2px"></div>
<svg class="abs" style="left:276px;top:213px" width="75" height="76"><use href="#mpc"/></svg>
<div class="t" style="left:361.0px;top:230.1px;font-size:17.5px;color:#1b1b1b;">VID_20240926_150354.mp4</div>
<div class="t" style="left:361.0px;top:258.1px;font-size:17.5px;color:#3b3b3b;">20.4 MB</div>
<div class="abs" style="left:656px;top:212px;width:375px;height:78px;background:#cce8ff;border:1px solid #2f6a9c;border-radius:2px"></div>
<svg class="abs" style="left:657px;top:213px" width="75" height="76"><use href="#mpc"/></svg>
<div class="t" style="left:742.0px;top:230.1px;font-size:17.5px;color:#1b1b1b;">VID_20240926_150328.mp4</div>
<div class="t" style="left:742.0px;top:258.1px;font-size:17.5px;color:#3b3b3b;">20.6 MB</div>
<div class="abs" style="left:1037px;top:212px;width:375px;height:78px;background:#cce8ff;border:1px solid #2f6a9c;border-radius:2px"></div>
<svg class="abs" style="left:1038px;top:213px" width="75" height="76"><use href="#mpc"/></svg>
<div class="t" style="left:1123.0px;top:230.1px;font-size:17.5px;color:#1b1b1b;">VID_20230927_163008.mp4</div>
<div class="t" style="left:1123.0px;top:258.1px;font-size:17.5px;color:#3b3b3b;">28.6 MB</div>
<div class="abs" style="left:275px;top:296px;width:375px;height:78px;background:#cce8ff;border:1px solid #2f6a9c;border-radius:2px"></div>
<svg class="abs" style="left:276px;top:297px" width="75" height="76"><use href="#mpc"/></svg>
<div class="t" style="left:361.0px;top:314.1px;font-size:17.5px;color:#1b1b1b;">VID_20230926_231951.mp4</div>
<div class="t" style="left:361.0px;top:342.1px;font-size:17.5px;color:#3b3b3b;">138 MB</div>
<div class="abs" style="left:656px;top:296px;width:375px;height:78px;background:#cce8ff;border:1px solid #1f1f1f;border-radius:2px"></div>
<svg class="abs" style="left:657px;top:297px" width="75" height="76"><use href="#mpc"/></svg>
<div class="t" style="left:742.0px;top:314.1px;font-size:17.5px;color:#1b1b1b;">VID_20230817_212342.mp4</div>
<div class="t" style="left:742.0px;top:342.1px;font-size:17.5px;color:#3b3b3b;">59.4 MB</div>
<div class="abs" style="left:1037px;top:296px;width:375px;height:78px;background:#cce8ff;border:1px solid #2f6a9c;border-radius:2px"></div>
<svg class="abs" style="left:1038px;top:297px" width="75" height="76"><use href="#mpc"/></svg>
<div class="t" style="left:1123.0px;top:314.1px;font-size:17.5px;color:#1b1b1b;">VID_20230817_212327.mp4</div>
<div class="t" style="left:1123.0px;top:342.1px;font-size:17.5px;color:#3b3b3b;">57.2 MB</div>
<div class="abs" style="left:275px;top:380px;width:375px;height:78px;background:#cce8ff;border:1px solid #2f6a9c;border-radius:2px"></div>
<svg class="abs" style="left:276px;top:381px" width="75" height="76"><use href="#mpc"/></svg>
<div class="t" style="left:361.0px;top:398.1px;font-size:17.5px;color:#1b1b1b;">VID_20230629_173123.mp4</div>
<div class="t" style="left:361.0px;top:426.1px;font-size:17.5px;color:#3b3b3b;">30.2 MB</div>
<div class="abs" style="left:656px;top:380px;width:375px;height:78px;background:#cce8ff;border:1px solid #2f6a9c;border-radius:2px"></div>
<svg class="abs" style="left:657px;top:381px" width="75" height="76"><use href="#mpc"/></svg>
<div class="t" style="left:742.0px;top:398.1px;font-size:17.5px;color:#1b1b1b;">VID_20230525_124318.mp4</div>
<div class="t" style="left:742.0px;top:426.1px;font-size:17.5px;color:#3b3b3b;">6.54 MB</div>
<div class="abs" style="left:1037px;top:380px;width:375px;height:78px;background:#cce8ff;border:1px solid #2f6a9c;border-radius:2px"></div>
<svg class="abs" style="left:1038px;top:381px" width="75" height="76"><use href="#mpc"/></svg>
<div class="t" style="left:1123.0px;top:398.1px;font-size:17.5px;color:#1b1b1b;">VID_20230525_124232.mp4</div>
<div class="t" style="left:1123.0px;top:426.1px;font-size:17.5px;color:#3b3b3b;">12.1 MB</div>
<div class="abs" style="left:275px;top:464px;width:375px;height:78px;background:#cce8ff;border:1px solid #2f6a9c;border-radius:2px"></div>
<svg class="abs" style="left:276px;top:465px" width="75" height="76"><use href="#mpc"/></svg>
<div class="t" style="left:361.0px;top:482.1px;font-size:17.5px;color:#1b1b1b;">VID_20230525_123524.mp4</div>
<div class="t" style="left:361.0px;top:510.1px;font-size:17.5px;color:#3b3b3b;">25.2 MB</div>
<div class="abs" style="left:656px;top:464px;width:375px;height:78px;background:#cce8ff;border:1px solid #2f6a9c;border-radius:2px"></div>
<svg class="abs" style="left:657px;top:465px" width="75" height="76"><use href="#mpc"/></svg>
<div class="t" style="left:742.0px;top:482.1px;font-size:17.5px;color:#1b1b1b;">VID_20230525_121755.mp4</div>
<div class="t" style="left:742.0px;top:510.1px;font-size:17.5px;color:#3b3b3b;">28.1 MB</div>
<div class="abs" style="left:1037px;top:464px;width:375px;height:78px;background:#cce8ff;border:1px solid #2f6a9c;border-radius:2px"></div>
<svg class="abs" style="left:1038px;top:465px" width="75" height="76"><use href="#mpc"/></svg>
<div class="t" style="left:1123.0px;top:482.1px;font-size:17.5px;color:#1b1b1b;">VID_20230525_113834.mp4</div>
<div class="t" style="left:1123.0px;top:510.1px;font-size:17.5px;color:#3b3b3b;">18.7 MB</div>
<div class="abs" style="left:275px;top:548px;width:375px;height:78px;background:#cce8ff;border:1px solid #2f6a9c;border-radius:2px"></div>
<svg class="abs" style="left:276px;top:549px" width="75" height="76"><use href="#mpc"/></svg>
<div class="t" style="left:361.0px;top:566.1px;font-size:17.5px;color:#1b1b1b;">VID_20230522_124522.mp4</div>
<div class="t" style="left:361.0px;top:594.1px;font-size:17.5px;color:#3b3b3b;">32.8 MB</div>
<div class="abs" style="left:656px;top:548px;width:375px;height:78px;background:#cce8ff;border:1px solid #2f6a9c;border-radius:2px"></div>
<svg class="abs" style="left:657px;top:549px" width="75" height="76"><use href="#mpc"/></svg>
<div class="t" style="left:742.0px;top:566.1px;font-size:17.5px;color:#1b1b1b;">VID_20230214_124157.mp4</div>
<div class="t" style="left:742.0px;top:594.1px;font-size:17.5px;color:#3b3b3b;">105 MB</div>
<div class="abs" style="left:1037px;top:548px;width:375px;height:78px;background:#cce8ff;border:1px solid #2f6a9c;border-radius:2px"></div>
<svg class="abs" style="left:1038px;top:549px" width="75" height="76"><use href="#mpc"/></svg>
<div class="t" style="left:1123.0px;top:566.1px;font-size:17.5px;color:#1b1b1b;">VID_20230214_123732.mp4</div>
<div class="t" style="left:1123.0px;top:594.1px;font-size:17.5px;color:#3b3b3b;">22.4 MB</div>
<svg class="abs" style="left:276px;top:633px" width="75" height="76"><use href="#mpc"/></svg>
<div class="t" style="left:361.0px;top:650.1px;font-size:17.5px;color:#1b1b1b;">VID_20230214_095355.mp4</div>
<div class="t" style="left:361.0px;top:678.1px;font-size:17.5px;color:#6b6b6b;">41.8 MB</div>
<svg class="abs" style="left:657px;top:633px" width="75" height="76"><use href="#mpc"/></svg>
<div class="t" style="left:742.0px;top:650.1px;font-size:17.5px;color:#1b1b1b;">VID_20230131_172402.mp4</div>
<div class="t" style="left:742.0px;top:678.1px;font-size:17.5px;color:#6b6b6b;">56.1 MB</div>
<svg class="abs" style="left:1038px;top:633px" width="75" height="76"><use href="#mpc"/></svg>
<div class="t" style="left:1123.0px;top:650.1px;font-size:17.5px;color:#1b1b1b;">VID_20230124_180318.mp4</div>
<div class="t" style="left:1123.0px;top:678.1px;font-size:17.5px;color:#6b6b6b;">39.5 MB</div>
</div>

<svg width="0" height="0" style="position:absolute"><defs>
<linearGradient id="fg" x1="0" y1="0" x2="0" y2="1"><stop offset="0" stop-color="#ffe488"/><stop offset="1" stop-color="#f3c240"/></linearGradient>
<linearGradient id="pcg" x1="0" y1="0" x2="1" y2="1"><stop offset="0" stop-color="#5fd0f5"/><stop offset="1" stop-color="#1a8ed8"/></linearGradient>
<radialGradient id="glb" cx="0.35" cy="0.35" r="0.7"><stop offset="0" stop-color="#b8ecff"/><stop offset="1" stop-color="#2c8fd6"/></radialGradient>
<linearGradient id="nppg" x1="0" y1="0" x2="0" y2="1"><stop offset="0" stop-color="#e8e040"/><stop offset="1" stop-color="#40b020"/></linearGradient>
<linearGradient id="pg" x1="0" y1="0" x2="1" y2="1"><stop offset="0" stop-color="#f7f7f7"/><stop offset="1" stop-color="#e2e2e2"/></linearGradient>
<g id="mpc">
 <path d="M17 5.5H48.5L65.5 22.5V70H17Z" fill="#d0d0d0" transform="translate(.8 .8)" opacity=".7"/>
 <path d="M16.5 4.5H48L65 21.5V69H16.5Z" fill="url(#pg)" stroke="#c4c4c4" stroke-width="1"/>
 <path d="M48 4.5V21.5H65Z" fill="#fafafa" stroke="#cfcfcf" stroke-width="1"/>
 <rect x="5.6" y="10.5" width="32" height="9.6" rx="4.8" fill="#3b3b3b"/>
 <text x="21.6" y="18.2" font-family="Liberation Sans" font-size="8.4" fill="#f0f0f0" text-anchor="middle">.mp4</text>
 <path d="M20.2 31.2L57 21.4L58.6 25.8L21.4 35.4Z" fill="#111"/>
 <path d="M26.4 30.4L31.6 29L32.6 32.6L27.4 34ZM35 28.1L40 26.8L41 30.4L36 31.7ZM43.6 25.8L48.4 24.5L49.4 28.1L44.6 29.4ZM52 23.6L56 22.5L57 26.1L53 27.2Z" fill="#fff"/>
 <path d="M21 33.2L59.8 32L60.2 38.2L22 39.8Z" fill="#111"/>
 <path d="M29 39.5L33.5 33L37.5 32.9L33 39.3ZM38.5 39.2L43 32.7L47 32.6L42.5 39ZM48 38.9L52.5 32.4L56.5 32.3L52 38.7Z" fill="#fff"/>
 <circle cx="23.8" cy="35" r="0.9" fill="#fff"/><circle cx="24.2" cy="38" r="0.9" fill="#fff"/><circle cx="27.4" cy="37.8" r="0.9" fill="#fff"/>
 <path d="M22.8 40.2L59.6 38.6L61.4 59.8L25.6 63.2Z" fill="#fff" stroke="#111" stroke-width="2.3" stroke-linejoin="round"/>
 <g font-family="Liberation Sans" font-weight="700" font-size="19" stroke-width="1.5" stroke-linejoin="round">
  <text transform="translate(26.4 59.6) rotate(-5) scale(.8 1)" fill="#d4541f" stroke="#d4541f">3</text>
  <text transform="translate(37.4 58.4) rotate(-5) scale(.8 1)" fill="#4a7fd0" stroke="#4a7fd0">2</text>
  <text transform="translate(48.6 57.2) rotate(-5) scale(.8 1)" fill="#23a024" stroke="#23a024">1</text>
 </g>
</g>
</defs></svg><div class="menu" style="position:absolute;left:992px;top:452px;width:389px;height:523px;background:#f9f9f9;border-radius:8px;box-shadow:0 0 0 1px rgba(0,0,0,.1),0 4px 12px rgba(0,0,0,.2);overflow:hidden"><div class="abs" style="left:7px;top:387px;width:375px;height:34px;background:#f0f0f0;border-radius:4px"></div>
<div class="abs" style="left:7px;top:299px;width:377px;height:1px;background:#e6e6e6"></div>
<div class="abs" style="left:7px;top:345px;width:377px;height:1px;background:#e6e6e6"></div>
<div class="abs" style="left:7px;top:428px;width:377px;height:1px;background:#e6e6e6"></div>
<div class="abs" style="left:7px;top:475px;width:377px;height:1px;background:#e6e6e6"></div>
<div class="t" style="left:54.0px;top:15.1px;font-size:18px;color:#1a1a1a;font-weight:700;">Play with MPC-HC</div>
<svg class="abs" style="left:19px;top:15px" width="16" height="16"><g transform="rotate(-8 8 9)"><path d="M1.5 5L13.5 2.2L14.2 4.6L2.2 7.4Z" fill="#111"/><path d="M4 4.4L6 3.9L6.7 6.3L4.7 6.8ZM8 3.5L10 3L10.7 5.4L8.7 5.9Z" fill="#fff"/><rect x="1.8" y="7" width="12.5" height="8" fill="#fff" stroke="#111" stroke-width="1.4"/><rect x="1.8" y="7" width="12.5" height="2.2" fill="#111"/><rect x="3.6" y="10" width="2.4" height="4" fill="#d4541f"/><rect x="6.9" y="10" width="2.4" height="4" fill="#4a7fd0"/><rect x="10.2" y="10" width="2.2" height="4" fill="#23a024"/></g></svg>
<div class="t" style="left:54.0px;top:51.1px;font-size:18px;color:#1a1a1a;">Add to MPC-HC playlist</div>
<svg class="abs" style="left:19px;top:51px" width="16" height="16"><g transform="rotate(-8 8 9)"><path d="M1.5 5L13.5 2.2L14.2 4.6L2.2 7.4Z" fill="#111"/><path d="M4 4.4L6 3.9L6.7 6.3L4.7 6.8ZM8 3.5L10 3L10.7 5.4L8.7 5.9Z" fill="#fff"/><rect x="1.8" y="7" width="12.5" height="8" fill="#fff" stroke="#111" stroke-width="1.4"/><rect x="1.8" y="7" width="12.5" height="2.2" fill="#111"/><rect x="3.6" y="10" width="2.4" height="4" fill="#d4541f"/><rect x="6.9" y="10" width="2.4" height="4" fill="#4a7fd0"/><rect x="10.2" y="10" width="2.2" height="4" fill="#23a024"/></g></svg>
<div class="t" style="left:54.0px;top:87.1px;font-size:18px;color:#1a1a1a;">Edit with Clipchamp</div>
<svg class="abs" style="left:19px;top:87px" width="16" height="16"><path d="M1.8 4.6L13.6 2.4L14 4.8L2.2 7Z" fill="#6a2ad0"/><rect x="1.8" y="6.6" width="12.4" height="7.6" rx="1.6" fill="#8a4af0"/><rect x="1.8" y="9" width="12.4" height="2.6" fill="#b080ff"/></svg>
<div class="t" style="left:54.0px;top:123.1px;font-size:18px;color:#1a1a1a;">MediaInfo</div>
<svg class="abs" style="left:19px;top:123px" width="16" height="16"><path d="M2 4.2Q2 3 3.2 3H12.8Q14 3 14 4.2V10Q14 11.2 12.8 11.2H9.2L8 12.6L6.8 11.2H3.2Q2 11.2 2 10Z" fill="#e8f0f8" stroke="#4a4a4a" stroke-width="1.5"/><path d="M8 4.5V10" stroke="#aab" stroke-width="1"/></svg>
<div class="t" style="left:54.0px;top:159.1px;font-size:18px;color:#1a1a1a;">WinRAR</div>
<svg class="abs" style="left:19px;top:159px" width="16" height="16"><rect x="1" y="1.2" width="15" height="4.8" fill="#c83a3a"/><rect x="1" y="6" width="15" height="4.6" fill="#6a3aa8"/><rect x="1" y="10.6" width="15" height="4.8" fill="#2a8a3a"/><rect x="6" y="1.2" width="4.5" height="14.2" fill="#e07030" opacity=".75"/><rect x="6.2" y="7" width="4" height="3" fill="#f4f0e8"/></svg>
<div class="t" style="left:54.0px;top:195.1px;font-size:18px;color:#1a1a1a;">Edit with Notepad++</div>
<svg class="abs" style="left:19px;top:195px" width="16" height="16"><rect x="1.5" y="2" width="11" height="14" fill="#fafafa" stroke="#555" stroke-width="1"/><rect x="2" y="8" width="10" height="7.5" fill="url(#nppg)"/><path d="M9 9L15 2" stroke="#c8a040" stroke-width="2"/><path d="M14.2 2.8L15.4 1.6" stroke="#333" stroke-width="2"/></svg>
<div class="t" style="left:54.0px;top:231.1px;font-size:18px;color:#1a1a1a;">Mount as ImDisk Virtual Disk</div>
<div class="t" style="left:54.0px;top:267.1px;font-size:18px;color:#1a1a1a;">Add to Favorites</div>
<div class="t" style="left:54.0px;top:314.1px;font-size:18px;color:#1a1a1a;">Create Playlist</div>
<div class="t" style="left:54.0px;top:361.1px;font-size:18px;color:#1a1a1a;">Cut</div>
<div class="t" style="left:54.0px;top:397.1px;font-size:18px;color:#1a1a1a;">Copy</div>
<div class="t" style="left:54.0px;top:444.1px;font-size:18px;color:#1a1a1a;">Delete</div>
<div class="t" style="left:54.0px;top:491.1px;font-size:18px;color:#1a1a1a;">Properties</div>
<svg class="abs" style="left:361px;top:161px" width="8" height="13"><path d="M1 1L6.5 6.5L1 12" fill="none" stroke="#333" stroke-width="1.3"/></svg></div>
</body></html>
